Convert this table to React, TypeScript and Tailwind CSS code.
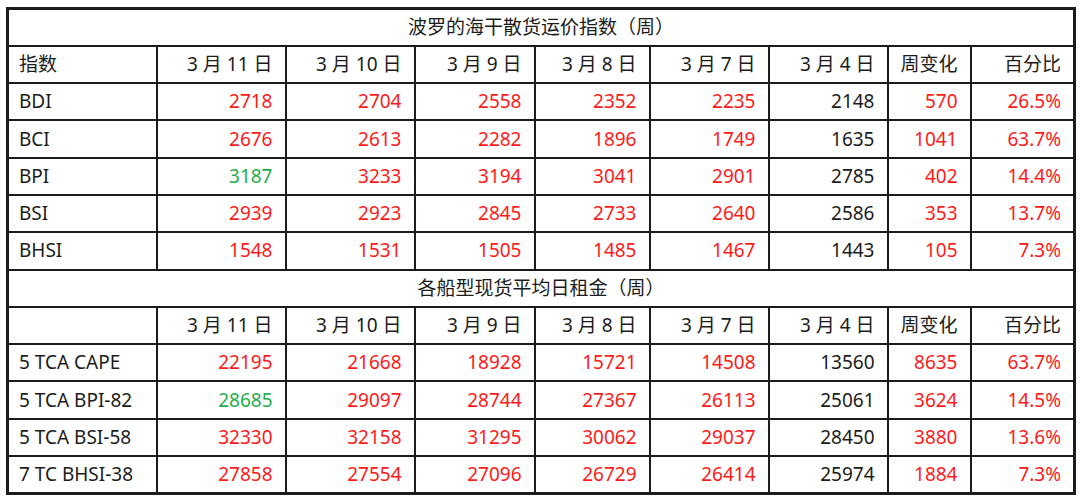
const dates = ['3 月 11 日', '3 月 10 日', '3 月 9 日', '3 月 8 日', '3 月 7 日', '3 月 4 日']

type Row = { name: string; values: string[]; change: string; pct: string; green?: boolean }

const indexRows: Row[] = [
  { name: 'BDI', values: ['2718', '2704', '2558', '2352', '2235', '2148'], change: '570', pct: '26.5%' },
  { name: 'BCI', values: ['2676', '2613', '2282', '1896', '1749', '1635'], change: '1041', pct: '63.7%' },
  { name: 'BPI', values: ['3187', '3233', '3194', '3041', '2901', '2785'], change: '402', pct: '14.4%', green: true },
  { name: 'BSI', values: ['2939', '2923', '2845', '2733', '2640', '2586'], change: '353', pct: '13.7%' },
  { name: 'BHSI', values: ['1548', '1531', '1505', '1485', '1467', '1443'], change: '105', pct: '7.3%' },
]

const hireRows: Row[] = [
  { name: '5 TCA CAPE', values: ['22195', '21668', '18928', '15721', '14508', '13560'], change: '8635', pct: '63.7%' },
  { name: '5 TCA BPI-82', values: ['28685', '29097', '28744', '27367', '26113', '25061'], change: '3624', pct: '14.5%', green: true },
  { name: '5 TCA BSI-58', values: ['32330', '32158', '31295', '30062', '29037', '28450'], change: '3880', pct: '13.6%' },
  { name: '7 TC BHSI-38', values: ['27858', '27554', '27096', '26729', '26414', '25974'], change: '1884', pct: '7.3%' },
]

const cell = 'border-2 border-[#1c1c1c] px-[12px] text-right'
const first = 'border-2 border-[#1c1c1c] pl-[10px] pr-[8px] text-left'

const TitleRow = ({ title }: { title: string }) => (
  <tr className="h-[37.3px]">
    <td colSpan={9} className="border-2 border-[#1c1c1c] text-center">
      {title}
    </td>
  </tr>
)

const HeaderRow = ({ label }: { label: string }) => (
  <tr className="h-[37.3px]">
    <td className={first}>{label}</td>
    {dates.map((d) => (
      <td key={d} className={cell}>
        {d}
      </td>
    ))}
    <td className={cell}>周变化</td>
    <td className={cell}>百分比</td>
  </tr>
)

const DataRow = ({ row }: { row: Row }) => (
  <tr className="h-[37.3px]">
    <td className={first}>{row.name}</td>
    {row.values.map((v, i) => (
      <td
        key={i}
        className={`${cell} ${
          i === 5 ? 'text-[#1c1c1c]' : i === 0 && row.green ? 'text-[#1fae4e]' : 'text-[#ff1a1a]'
        }`}
      >
        {v}
      </td>
    ))}
    <td className={`${cell} text-[#ff1a1a]`}>{row.change}</td>
    <td className={`${cell} text-[#ff1a1a]`}>{row.pct}</td>
  </tr>
)

const App = () => {
  return (
    <div className="w-[1080px] h-[498px] bg-white pt-[7px] pl-[6px] font-['Noto_Sans','Noto_Sans_CJK_SC',sans-serif] text-[19px] text-[#1c1c1c] leading-none">
      <table className="w-[1067px] table-fixed border-collapse border-[3px] border-[#1c1c1c]">
        <colgroup>
          <col className="w-[149px]" />
          <col className="w-[129px]" />
          <col className="w-[129px]" />
          <col className="w-[120px]" />
          <col className="w-[115px]" />
          <col className="w-[119px]" />
          <col className="w-[119px]" />
          <col className="w-[83px]" />
          <col className="w-[104px]" />
        </colgroup>
        <tbody>
          <TitleRow title="波罗的海干散货运价指数（周）" />
          <HeaderRow label="指数" />
          {indexRows.map((r) => (
            <DataRow key={r.name} row={r} />
          ))}
          <TitleRow title="各船型现货平均日租金（周）" />
          <HeaderRow label="" />
          {hireRows.map((r) => (
            <DataRow key={r.name} row={r} />
          ))}
        </tbody>
      </table>
    </div>
  )
}

export default App
